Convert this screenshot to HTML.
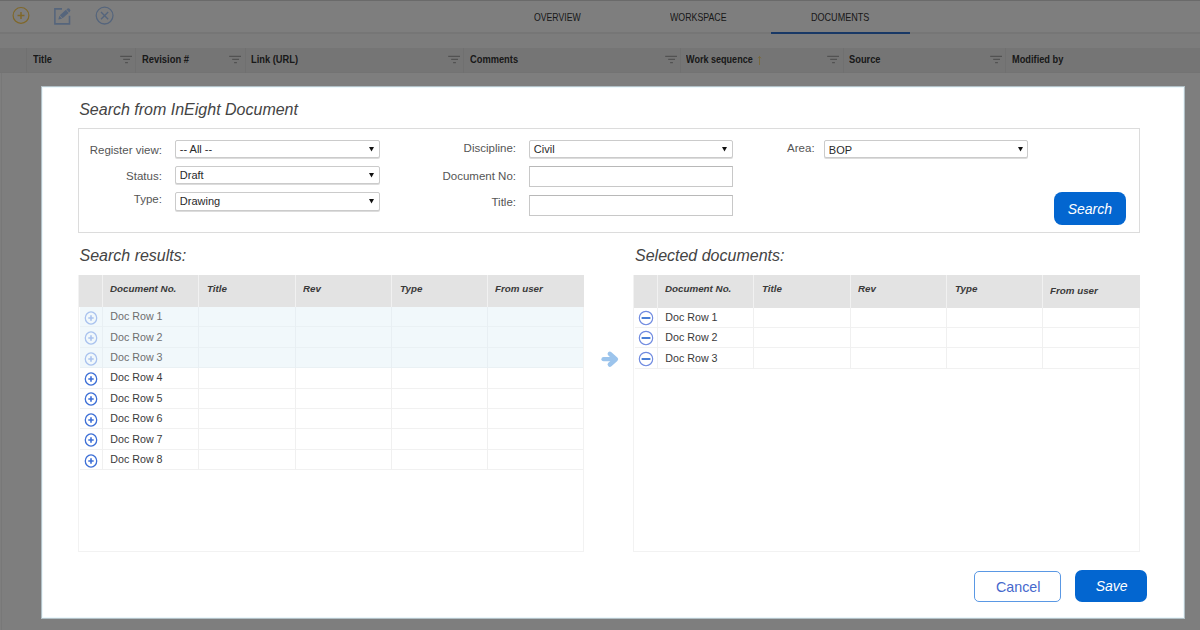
<!DOCTYPE html>
<html><head><meta charset="utf-8">
<style>
*{box-sizing:border-box;margin:0;padding:0}
html,body{width:1200px;height:630px;overflow:hidden;background:#fafafa;font-family:"Liberation Sans",sans-serif;position:relative}
.t{position:absolute;white-space:nowrap}
.r{position:absolute}
svg{position:absolute;overflow:visible}
</style></head><body>
<div class="r" style="left:0px;top:0px;width:1200px;height:1px;background:#d4d4d4"></div>
<div class="r" style="left:0px;top:1px;width:1200px;height:31px;background:#fdfdfd"></div>
<div class="r" style="left:0px;top:32px;width:1200px;height:2px;background:#ececec"></div>
<div class="r" style="left:0px;top:34px;width:1200px;height:14px;background:#f9f9f9"></div>
<div class="r" style="left:0px;top:48px;width:1200px;height:25px;background:#ebebeb"></div>
<div class="r" style="left:0px;top:73px;width:1200px;height:557px;background:#fdfdfd"></div>
<div class="r" style="left:0px;top:72px;width:1200px;height:1px;background:#e6e6e6"></div>
<div class="r" style="left:1px;top:73px;width:1px;height:557px;background:#f0f0f0"></div>
<svg style="left:0;top:0" width="130" height="33" viewBox="0 0 130 33">
<circle cx="21" cy="15.4" r="7.9" fill="none" stroke="#ffcf55" stroke-width="1.2"/>
<path d="M21 12v7M17.5 15.5h7" stroke="#ffcf55" stroke-width="1.5"/>
<path d="M62 8.9H54.9V23.9H69.5V15.8" fill="none" stroke="#abcaf8" stroke-width="1.6"/>
<g transform="translate(58.3 19.4) rotate(-41.9)" fill="#abcaf8"><path d="M0 0L3.3 -2.1V2.1z"/><rect x="3.9" y="-2.1" width="8.2" height="4.2"/><path d="M12.7 -2.1H13.4A2.1 2.1 0 0 1 13.4 2.1H12.7z"/></g>
<circle cx="104.6" cy="15.6" r="8.4" fill="none" stroke="#abcaf8" stroke-width="1.3"/>
<path d="M101 12l7.2 7.2M108.2 12l-7.2 7.2" stroke="#abcaf8" stroke-width="1.4"/>
</svg>
<div class="t" style="left:534.40px;top:11.89px;font-size:11px;line-height:11px;color:#333;font-weight:normal;font-style:normal;transform:scaleX(0.79);transform-origin:left center;">OVERVIEW</div>
<div class="t" style="left:670.40px;top:11.89px;font-size:11px;line-height:11px;color:#333;font-weight:normal;font-style:normal;transform:scaleX(0.8);transform-origin:left center;">WORKSPACE</div>
<div class="t" style="left:811.40px;top:11.89px;font-size:11px;line-height:11px;color:#333;font-weight:normal;font-style:normal;transform:scaleX(0.823);transform-origin:left center;">DOCUMENTS</div>
<div class="r" style="left:771px;top:32px;width:139px;height:2px;background:#3070cc"></div>
<div class="r" style="left:26px;top:48px;width:1px;height:25px;background:#e0e0e0"></div>
<div class="r" style="left:135px;top:48px;width:1px;height:25px;background:#e0e0e0"></div>
<div class="r" style="left:245px;top:48px;width:1px;height:25px;background:#e0e0e0"></div>
<div class="r" style="left:463px;top:48px;width:1px;height:25px;background:#e0e0e0"></div>
<div class="r" style="left:680px;top:48px;width:1px;height:25px;background:#e0e0e0"></div>
<div class="r" style="left:843px;top:48px;width:1px;height:25px;background:#e0e0e0"></div>
<div class="r" style="left:1005px;top:48px;width:1px;height:25px;background:#e0e0e0"></div>
<div class="t" style="left:33.30px;top:54.83px;font-size:10px;line-height:10px;color:#333;font-weight:bold;font-style:normal;transform:scaleX(0.93);transform-origin:left center;">Title</div>
<div class="t" style="left:142.30px;top:54.83px;font-size:10px;line-height:10px;color:#333;font-weight:bold;font-style:normal;transform:scaleX(0.94);transform-origin:left center;">Revision #</div>
<div class="t" style="left:251.30px;top:54.83px;font-size:10px;line-height:10px;color:#333;font-weight:bold;font-style:normal;transform:scaleX(0.93);transform-origin:left center;">Link (URL)</div>
<div class="t" style="left:469.80px;top:54.83px;font-size:10px;line-height:10px;color:#333;font-weight:bold;font-style:normal;transform:scaleX(0.93);transform-origin:left center;">Comments</div>
<div class="t" style="left:686.30px;top:54.83px;font-size:10px;line-height:10px;color:#333;font-weight:bold;font-style:normal;transform:scaleX(0.905);transform-origin:left center;">Work sequence</div>
<div class="t" style="left:849.30px;top:54.83px;font-size:10px;line-height:10px;color:#333;font-weight:bold;font-style:normal;transform:scaleX(0.93);transform-origin:left center;">Source</div>
<div class="t" style="left:1011.80px;top:54.83px;font-size:10px;line-height:10px;color:#333;font-weight:bold;font-style:normal;transform:scaleX(0.925);transform-origin:left center;">Modified by</div>
<svg style="left:120px;top:55px" width="12" height="9" viewBox="0 0 12 9"><path d="M0.2 1.4h11.8M3.2 4.4h6.8M5.1 7.6h2.8" stroke="#a4a4a4" stroke-width="1.3"/></svg>
<svg style="left:229px;top:55px" width="12" height="9" viewBox="0 0 12 9"><path d="M0.2 1.4h11.8M3.2 4.4h6.8M5.1 7.6h2.8" stroke="#a4a4a4" stroke-width="1.3"/></svg>
<svg style="left:447.5px;top:55px" width="12" height="9" viewBox="0 0 12 9"><path d="M0.2 1.4h11.8M3.2 4.4h6.8M5.1 7.6h2.8" stroke="#a4a4a4" stroke-width="1.3"/></svg>
<svg style="left:664.5px;top:55px" width="12" height="9" viewBox="0 0 12 9"><path d="M0.2 1.4h11.8M3.2 4.4h6.8M5.1 7.6h2.8" stroke="#a4a4a4" stroke-width="1.3"/></svg>
<svg style="left:827px;top:55px" width="12" height="9" viewBox="0 0 12 9"><path d="M0.2 1.4h11.8M3.2 4.4h6.8M5.1 7.6h2.8" stroke="#a4a4a4" stroke-width="1.3"/></svg>
<svg style="left:989.5px;top:55px" width="12" height="9" viewBox="0 0 12 9"><path d="M0.2 1.4h11.8M3.2 4.4h6.8M5.1 7.6h2.8" stroke="#a4a4a4" stroke-width="1.3"/></svg>
<svg style="left:757px;top:56px" width="5" height="10" viewBox="0 0 5 10"><path d="M2.5 0.5v8.5M1 2.3L2.5 0.5 4 2.3" fill="none" stroke="#f2cf70" stroke-width="0.9"/></svg>
<div class="r" style="left:0px;top:0px;width:1200px;height:630px;background:rgba(0,0,0,0.5)"></div>
<div class="r" style="left:40.6px;top:85.6px;width:1144.8000000000002px;height:533.8px;background:#fff;border:1px solid #b2c0c6;box-shadow:inset 0 0 0 1px #edf8fc"></div>
<div class="t" style="left:79.20px;top:102.46px;font-size:16px;line-height:16px;color:#444;font-weight:normal;font-style:italic;">Search from InEight Document</div>
<div class="r" style="left:78px;top:128px;width:1062px;height:105px;border:1px solid #dcdcdc"></div>
<div class="t" style="right:1038.10px;top:144.57px;font-size:11.5px;line-height:11.5px;color:#555;font-weight:normal;font-style:normal;text-align:right;">Register view:</div>
<div class="t" style="right:1038.10px;top:170.57px;font-size:11.5px;line-height:11.5px;color:#555;font-weight:normal;font-style:normal;text-align:right;">Status:</div>
<div class="t" style="right:1038.10px;top:193.87px;font-size:11.5px;line-height:11.5px;color:#555;font-weight:normal;font-style:normal;text-align:right;">Type:</div>
<div class="t" style="right:684.00px;top:143.17px;font-size:11.5px;line-height:11.5px;color:#555;font-weight:normal;font-style:normal;text-align:right;">Discipline:</div>
<div class="t" style="right:684.00px;top:170.57px;font-size:11.5px;line-height:11.5px;color:#555;font-weight:normal;font-style:normal;text-align:right;">Document No:</div>
<div class="t" style="right:684.00px;top:196.67px;font-size:11.5px;line-height:11.5px;color:#555;font-weight:normal;font-style:normal;text-align:right;">Title:</div>
<div class="t" style="right:385.40px;top:143.27px;font-size:11.5px;line-height:11.5px;color:#555;font-weight:normal;font-style:normal;text-align:right;">Area:</div>
<div class="r" style="left:175px;top:140.3px;width:204.5px;height:17.69999999999999px;border:1px solid #cbcbcb;border-radius:2px;background:#fff;box-shadow:0 1px 0 #dcdcdc"></div>
<div class="t" style="left:179.80px;top:143.99px;font-size:11px;line-height:11px;color:#2a2a2a;font-weight:normal;font-style:normal;">-- All --</div>
<svg style="left:369.0px;top:147.0px" width="5" height="4.5" viewBox="0 0 5 4.5"><path d="M0 0H5L2.5 4.5z" fill="#111"/></svg>
<div class="r" style="left:175px;top:166.4px;width:204.5px;height:17.900000000000006px;border:1px solid #cbcbcb;border-radius:2px;background:#fff;box-shadow:0 1px 0 #dcdcdc"></div>
<div class="t" style="left:179.80px;top:170.29px;font-size:11px;line-height:11px;color:#2a2a2a;font-weight:normal;font-style:normal;">Draft</div>
<svg style="left:369.0px;top:173.1px" width="5" height="4.5" viewBox="0 0 5 4.5"><path d="M0 0H5L2.5 4.5z" fill="#111"/></svg>
<div class="r" style="left:175px;top:192.4px;width:204.5px;height:18.299999999999983px;border:1px solid #cbcbcb;border-radius:2px;background:#fff;box-shadow:0 1px 0 #dcdcdc"></div>
<div class="t" style="left:179.80px;top:196.39px;font-size:11px;line-height:11px;color:#2a2a2a;font-weight:normal;font-style:normal;">Drawing</div>
<svg style="left:369.0px;top:199.1px" width="5" height="4.5" viewBox="0 0 5 4.5"><path d="M0 0H5L2.5 4.5z" fill="#111"/></svg>
<div class="r" style="left:529.3px;top:140.3px;width:203.4000000000001px;height:17.69999999999999px;border:1px solid #cbcbcb;border-radius:2px;background:#fff;box-shadow:0 1px 0 #dcdcdc"></div>
<div class="t" style="left:533.80px;top:143.89px;font-size:11px;line-height:11px;color:#2a2a2a;font-weight:normal;font-style:normal;">Civil</div>
<svg style="left:722.2px;top:147.0px" width="5" height="4.5" viewBox="0 0 5 4.5"><path d="M0 0H5L2.5 4.5z" fill="#111"/></svg>
<div class="r" style="left:823.8px;top:140.4px;width:204.5px;height:17.599999999999994px;border:1px solid #cbcbcb;border-radius:2px;background:#fff;box-shadow:0 1px 0 #dcdcdc"></div>
<div class="t" style="left:828.80px;top:144.69px;font-size:11px;line-height:11px;color:#2a2a2a;font-weight:normal;font-style:normal;">BOP</div>
<svg style="left:1017.8px;top:147.1px" width="5" height="4.5" viewBox="0 0 5 4.5"><path d="M0 0H5L2.5 4.5z" fill="#111"/></svg>
<div class="r" style="left:529.3px;top:166.4px;width:203.4000000000001px;height:20.299999999999983px;border:1px solid #c8c8c8;border-top-color:#b8b8b8;background:#fff"></div>
<div class="r" style="left:529.3px;top:195.3px;width:203.4000000000001px;height:20.399999999999977px;border:1px solid #c8c8c8;border-top-color:#b8b8b8;background:#fff"></div>
<div class="r" style="left:1054px;top:192.4px;width:72px;height:32.900000000000006px;background:#0366d0;border-radius:8px"></div>
<div class="t" style="left:1067.70px;top:201.95px;font-size:14px;line-height:14px;color:#fff;font-weight:normal;font-style:italic;">Search</div>
<div class="t" style="left:79.50px;top:248.06px;font-size:16px;line-height:16px;color:#444;font-weight:normal;font-style:italic;">Search results:</div>
<div class="t" style="left:635.00px;top:248.06px;font-size:16px;line-height:16px;color:#444;font-weight:normal;font-style:italic;">Selected documents:</div>
<div class="r" style="left:78px;top:275px;width:506.4px;height:276.5px;border:1px solid #f2f2f2;background:#fff"></div>
<div class="r" style="left:78.75px;top:275px;width:505.65px;height:32px;background:#e3e3e3"></div>
<div class="r" style="left:102.0px;top:275px;width:1.0px;height:32px;background:#f1f1f1"></div>
<div class="r" style="left:197.75px;top:275px;width:1.0px;height:32px;background:#f1f1f1"></div>
<div class="r" style="left:294.5px;top:275px;width:1.0px;height:32px;background:#f1f1f1"></div>
<div class="r" style="left:390.75px;top:275px;width:1.0px;height:32px;background:#f1f1f1"></div>
<div class="r" style="left:487.0px;top:275px;width:1.0px;height:32px;background:#f1f1f1"></div>
<div class="t" style="left:110.20px;top:284.16px;font-size:9.5px;line-height:9.5px;color:#3a3a3a;font-weight:bold;font-style:italic;transform:scaleX(1.03);transform-origin:left center;">Document No.</div>
<div class="t" style="left:207.05px;top:284.16px;font-size:9.5px;line-height:9.5px;color:#3a3a3a;font-weight:bold;font-style:italic;transform:scaleX(1.03);transform-origin:left center;">Title</div>
<div class="t" style="left:302.80px;top:284.16px;font-size:9.5px;line-height:9.5px;color:#3a3a3a;font-weight:bold;font-style:italic;transform:scaleX(1.03);transform-origin:left center;">Rev</div>
<div class="t" style="left:399.85px;top:284.16px;font-size:9.5px;line-height:9.5px;color:#3a3a3a;font-weight:bold;font-style:italic;transform:scaleX(1.03);transform-origin:left center;">Type</div>
<div class="t" style="left:495.40px;top:284.16px;font-size:9.5px;line-height:9.5px;color:#3a3a3a;font-weight:bold;font-style:italic;transform:scaleX(1.03);transform-origin:left center;">From user</div>
<div class="r" style="left:79.75px;top:307.0px;width:503.65px;height:20.399999999999977px;background:#f1f8fb"></div>
<div class="r" style="left:79.75px;top:326.4px;width:503.65px;height:1.0px;background:#eaf1f4"></div>
<div class="r" style="left:102.0px;top:307.0px;width:1.0px;height:20.399999999999977px;background:#e8eff3"></div>
<div class="r" style="left:197.75px;top:307.0px;width:1.0px;height:20.399999999999977px;background:#e8eff3"></div>
<div class="r" style="left:294.5px;top:307.0px;width:1.0px;height:20.399999999999977px;background:#e8eff3"></div>
<div class="r" style="left:390.75px;top:307.0px;width:1.0px;height:20.399999999999977px;background:#e8eff3"></div>
<div class="r" style="left:487.0px;top:307.0px;width:1.0px;height:20.399999999999977px;background:#e8eff3"></div>
<div class="t" style="left:110.30px;top:311.24px;font-size:10.7px;line-height:10.7px;color:#6e6e6e;font-weight:normal;font-style:normal;">Doc Row 1</div>
<svg style="left:83.35px;top:309.8px" width="16" height="16" viewBox="0 0 16 16"><ellipse cx="8" cy="8" rx="5.7" ry="6.1" fill="none" stroke="#a9c2ee" stroke-width="1.3"/><path d="M8 5.2v5.6M5.3 8h5.4" stroke="#a9c2ee" stroke-width="1.6"/></svg>
<div class="r" style="left:79.75px;top:327.4px;width:503.65px;height:20.399999999999977px;background:#f1f8fb"></div>
<div class="r" style="left:79.75px;top:346.79999999999995px;width:503.65px;height:1.0px;background:#eaf1f4"></div>
<div class="r" style="left:102.0px;top:327.4px;width:1.0px;height:20.399999999999977px;background:#e8eff3"></div>
<div class="r" style="left:197.75px;top:327.4px;width:1.0px;height:20.399999999999977px;background:#e8eff3"></div>
<div class="r" style="left:294.5px;top:327.4px;width:1.0px;height:20.399999999999977px;background:#e8eff3"></div>
<div class="r" style="left:390.75px;top:327.4px;width:1.0px;height:20.399999999999977px;background:#e8eff3"></div>
<div class="r" style="left:487.0px;top:327.4px;width:1.0px;height:20.399999999999977px;background:#e8eff3"></div>
<div class="t" style="left:110.30px;top:331.64px;font-size:10.7px;line-height:10.7px;color:#6e6e6e;font-weight:normal;font-style:normal;">Doc Row 2</div>
<svg style="left:83.35px;top:330.2px" width="16" height="16" viewBox="0 0 16 16"><ellipse cx="8" cy="8" rx="5.7" ry="6.1" fill="none" stroke="#a9c2ee" stroke-width="1.3"/><path d="M8 5.2v5.6M5.3 8h5.4" stroke="#a9c2ee" stroke-width="1.6"/></svg>
<div class="r" style="left:79.75px;top:347.8px;width:503.65px;height:20.399999999999977px;background:#f1f8fb"></div>
<div class="r" style="left:79.75px;top:367.2px;width:503.65px;height:1.0px;background:#eaf1f4"></div>
<div class="r" style="left:102.0px;top:347.8px;width:1.0px;height:20.399999999999977px;background:#e8eff3"></div>
<div class="r" style="left:197.75px;top:347.8px;width:1.0px;height:20.399999999999977px;background:#e8eff3"></div>
<div class="r" style="left:294.5px;top:347.8px;width:1.0px;height:20.399999999999977px;background:#e8eff3"></div>
<div class="r" style="left:390.75px;top:347.8px;width:1.0px;height:20.399999999999977px;background:#e8eff3"></div>
<div class="r" style="left:487.0px;top:347.8px;width:1.0px;height:20.399999999999977px;background:#e8eff3"></div>
<div class="t" style="left:110.30px;top:352.04px;font-size:10.7px;line-height:10.7px;color:#6e6e6e;font-weight:normal;font-style:normal;">Doc Row 3</div>
<svg style="left:83.35px;top:350.6px" width="16" height="16" viewBox="0 0 16 16"><ellipse cx="8" cy="8" rx="5.7" ry="6.1" fill="none" stroke="#a9c2ee" stroke-width="1.3"/><path d="M8 5.2v5.6M5.3 8h5.4" stroke="#a9c2ee" stroke-width="1.6"/></svg>
<div class="r" style="left:79.75px;top:387.59999999999997px;width:503.65px;height:1.0px;background:#f1f1f1"></div>
<div class="r" style="left:102.0px;top:368.2px;width:1.0px;height:20.399999999999977px;background:#f0f0f0"></div>
<div class="r" style="left:197.75px;top:368.2px;width:1.0px;height:20.399999999999977px;background:#f0f0f0"></div>
<div class="r" style="left:294.5px;top:368.2px;width:1.0px;height:20.399999999999977px;background:#f0f0f0"></div>
<div class="r" style="left:390.75px;top:368.2px;width:1.0px;height:20.399999999999977px;background:#f0f0f0"></div>
<div class="r" style="left:487.0px;top:368.2px;width:1.0px;height:20.399999999999977px;background:#f0f0f0"></div>
<div class="t" style="left:110.30px;top:372.44px;font-size:10.7px;line-height:10.7px;color:#3a3a3a;font-weight:normal;font-style:normal;">Doc Row 4</div>
<svg style="left:83.35px;top:371.0px" width="16" height="16" viewBox="0 0 16 16"><ellipse cx="8" cy="8" rx="5.7" ry="6.1" fill="none" stroke="#3d6fd6" stroke-width="1.3"/><path d="M8 5.2v5.6M5.3 8h5.4" stroke="#3d6fd6" stroke-width="1.6"/></svg>
<div class="r" style="left:79.75px;top:408.0px;width:503.65px;height:1.0px;background:#f1f1f1"></div>
<div class="r" style="left:102.0px;top:388.6px;width:1.0px;height:20.399999999999977px;background:#f0f0f0"></div>
<div class="r" style="left:197.75px;top:388.6px;width:1.0px;height:20.399999999999977px;background:#f0f0f0"></div>
<div class="r" style="left:294.5px;top:388.6px;width:1.0px;height:20.399999999999977px;background:#f0f0f0"></div>
<div class="r" style="left:390.75px;top:388.6px;width:1.0px;height:20.399999999999977px;background:#f0f0f0"></div>
<div class="r" style="left:487.0px;top:388.6px;width:1.0px;height:20.399999999999977px;background:#f0f0f0"></div>
<div class="t" style="left:110.30px;top:392.84px;font-size:10.7px;line-height:10.7px;color:#3a3a3a;font-weight:normal;font-style:normal;">Doc Row 5</div>
<svg style="left:83.35px;top:391.40000000000003px" width="16" height="16" viewBox="0 0 16 16"><ellipse cx="8" cy="8" rx="5.7" ry="6.1" fill="none" stroke="#3d6fd6" stroke-width="1.3"/><path d="M8 5.2v5.6M5.3 8h5.4" stroke="#3d6fd6" stroke-width="1.6"/></svg>
<div class="r" style="left:79.75px;top:428.4px;width:503.65px;height:1.0px;background:#f1f1f1"></div>
<div class="r" style="left:102.0px;top:409.0px;width:1.0px;height:20.399999999999977px;background:#f0f0f0"></div>
<div class="r" style="left:197.75px;top:409.0px;width:1.0px;height:20.399999999999977px;background:#f0f0f0"></div>
<div class="r" style="left:294.5px;top:409.0px;width:1.0px;height:20.399999999999977px;background:#f0f0f0"></div>
<div class="r" style="left:390.75px;top:409.0px;width:1.0px;height:20.399999999999977px;background:#f0f0f0"></div>
<div class="r" style="left:487.0px;top:409.0px;width:1.0px;height:20.399999999999977px;background:#f0f0f0"></div>
<div class="t" style="left:110.30px;top:413.24px;font-size:10.7px;line-height:10.7px;color:#3a3a3a;font-weight:normal;font-style:normal;">Doc Row 6</div>
<svg style="left:83.35px;top:411.8px" width="16" height="16" viewBox="0 0 16 16"><ellipse cx="8" cy="8" rx="5.7" ry="6.1" fill="none" stroke="#3d6fd6" stroke-width="1.3"/><path d="M8 5.2v5.6M5.3 8h5.4" stroke="#3d6fd6" stroke-width="1.6"/></svg>
<div class="r" style="left:79.75px;top:448.79999999999995px;width:503.65px;height:1.0px;background:#f1f1f1"></div>
<div class="r" style="left:102.0px;top:429.4px;width:1.0px;height:20.399999999999977px;background:#f0f0f0"></div>
<div class="r" style="left:197.75px;top:429.4px;width:1.0px;height:20.399999999999977px;background:#f0f0f0"></div>
<div class="r" style="left:294.5px;top:429.4px;width:1.0px;height:20.399999999999977px;background:#f0f0f0"></div>
<div class="r" style="left:390.75px;top:429.4px;width:1.0px;height:20.399999999999977px;background:#f0f0f0"></div>
<div class="r" style="left:487.0px;top:429.4px;width:1.0px;height:20.399999999999977px;background:#f0f0f0"></div>
<div class="t" style="left:110.30px;top:433.64px;font-size:10.7px;line-height:10.7px;color:#3a3a3a;font-weight:normal;font-style:normal;">Doc Row 7</div>
<svg style="left:83.35px;top:432.2px" width="16" height="16" viewBox="0 0 16 16"><ellipse cx="8" cy="8" rx="5.7" ry="6.1" fill="none" stroke="#3d6fd6" stroke-width="1.3"/><path d="M8 5.2v5.6M5.3 8h5.4" stroke="#3d6fd6" stroke-width="1.6"/></svg>
<div class="r" style="left:79.75px;top:469.19999999999993px;width:503.65px;height:1.0px;background:#f1f1f1"></div>
<div class="r" style="left:102.0px;top:449.79999999999995px;width:1.0px;height:20.399999999999977px;background:#f0f0f0"></div>
<div class="r" style="left:197.75px;top:449.79999999999995px;width:1.0px;height:20.399999999999977px;background:#f0f0f0"></div>
<div class="r" style="left:294.5px;top:449.79999999999995px;width:1.0px;height:20.399999999999977px;background:#f0f0f0"></div>
<div class="r" style="left:390.75px;top:449.79999999999995px;width:1.0px;height:20.399999999999977px;background:#f0f0f0"></div>
<div class="r" style="left:487.0px;top:449.79999999999995px;width:1.0px;height:20.399999999999977px;background:#f0f0f0"></div>
<div class="t" style="left:110.30px;top:454.04px;font-size:10.7px;line-height:10.7px;color:#3a3a3a;font-weight:normal;font-style:normal;">Doc Row 8</div>
<svg style="left:83.35px;top:452.59999999999997px" width="16" height="16" viewBox="0 0 16 16"><ellipse cx="8" cy="8" rx="5.7" ry="6.1" fill="none" stroke="#3d6fd6" stroke-width="1.3"/><path d="M8 5.2v5.6M5.3 8h5.4" stroke="#3d6fd6" stroke-width="1.6"/></svg>
<div class="r" style="left:633px;top:275px;width:506.5999999999999px;height:276.5px;border:1px solid #f2f2f2;background:#fff"></div>
<div class="r" style="left:633.75px;top:275px;width:505.8499999999999px;height:32.5px;background:#e3e3e3"></div>
<div class="r" style="left:657.0px;top:275px;width:1.0px;height:32.5px;background:#f1f1f1"></div>
<div class="r" style="left:752.75px;top:275px;width:1.0px;height:32.5px;background:#f1f1f1"></div>
<div class="r" style="left:850.0px;top:275px;width:1.0px;height:32.5px;background:#f1f1f1"></div>
<div class="r" style="left:945.75px;top:275px;width:1.0px;height:32.5px;background:#f1f1f1"></div>
<div class="r" style="left:1042.0px;top:275px;width:1.0px;height:32.5px;background:#f1f1f1"></div>
<div class="t" style="left:665.20px;top:284.16px;font-size:9.5px;line-height:9.5px;color:#3a3a3a;font-weight:bold;font-style:italic;transform:scaleX(1.03);transform-origin:left center;">Document No.</div>
<div class="t" style="left:762.05px;top:284.16px;font-size:9.5px;line-height:9.5px;color:#3a3a3a;font-weight:bold;font-style:italic;transform:scaleX(1.03);transform-origin:left center;">Title</div>
<div class="t" style="left:858.30px;top:284.16px;font-size:9.5px;line-height:9.5px;color:#3a3a3a;font-weight:bold;font-style:italic;transform:scaleX(1.03);transform-origin:left center;">Rev</div>
<div class="t" style="left:954.85px;top:284.16px;font-size:9.5px;line-height:9.5px;color:#3a3a3a;font-weight:bold;font-style:italic;transform:scaleX(1.03);transform-origin:left center;">Type</div>
<div class="t" style="left:1050.40px;top:285.66px;font-size:9.5px;line-height:9.5px;color:#3a3a3a;font-weight:bold;font-style:italic;transform:scaleX(1.03);transform-origin:left center;">From user</div>
<div class="r" style="left:634.75px;top:326.9px;width:503.8499999999999px;height:1.0px;background:#f1f1f1"></div>
<div class="r" style="left:657.0px;top:307.5px;width:1.0px;height:20.399999999999977px;background:#f0f0f0"></div>
<div class="r" style="left:752.75px;top:307.5px;width:1.0px;height:20.399999999999977px;background:#f0f0f0"></div>
<div class="r" style="left:850.0px;top:307.5px;width:1.0px;height:20.399999999999977px;background:#f0f0f0"></div>
<div class="r" style="left:945.75px;top:307.5px;width:1.0px;height:20.399999999999977px;background:#f0f0f0"></div>
<div class="r" style="left:1042.0px;top:307.5px;width:1.0px;height:20.399999999999977px;background:#f0f0f0"></div>
<div class="t" style="left:665.30px;top:311.74px;font-size:10.7px;line-height:10.7px;color:#3a3a3a;font-weight:normal;font-style:normal;">Doc Row 1</div>
<svg style="left:637.65px;top:310.0px" width="16" height="16" viewBox="0 0 16 16"><circle cx="8" cy="8" r="6.7" fill="none" stroke="#6f8ae0" stroke-width="1.15"/><path d="M3.6 8h8.8" stroke="#4a7ed6" stroke-width="2"/></svg>
<div class="r" style="left:634.75px;top:347.29999999999995px;width:503.8499999999999px;height:1.0px;background:#f1f1f1"></div>
<div class="r" style="left:657.0px;top:327.9px;width:1.0px;height:20.399999999999977px;background:#f0f0f0"></div>
<div class="r" style="left:752.75px;top:327.9px;width:1.0px;height:20.399999999999977px;background:#f0f0f0"></div>
<div class="r" style="left:850.0px;top:327.9px;width:1.0px;height:20.399999999999977px;background:#f0f0f0"></div>
<div class="r" style="left:945.75px;top:327.9px;width:1.0px;height:20.399999999999977px;background:#f0f0f0"></div>
<div class="r" style="left:1042.0px;top:327.9px;width:1.0px;height:20.399999999999977px;background:#f0f0f0"></div>
<div class="t" style="left:665.30px;top:332.14px;font-size:10.7px;line-height:10.7px;color:#3a3a3a;font-weight:normal;font-style:normal;">Doc Row 2</div>
<svg style="left:637.65px;top:330.4px" width="16" height="16" viewBox="0 0 16 16"><circle cx="8" cy="8" r="6.7" fill="none" stroke="#6f8ae0" stroke-width="1.15"/><path d="M3.6 8h8.8" stroke="#4a7ed6" stroke-width="2"/></svg>
<div class="r" style="left:634.75px;top:367.7px;width:503.8499999999999px;height:1.0px;background:#f1f1f1"></div>
<div class="r" style="left:657.0px;top:348.3px;width:1.0px;height:20.399999999999977px;background:#f0f0f0"></div>
<div class="r" style="left:752.75px;top:348.3px;width:1.0px;height:20.399999999999977px;background:#f0f0f0"></div>
<div class="r" style="left:850.0px;top:348.3px;width:1.0px;height:20.399999999999977px;background:#f0f0f0"></div>
<div class="r" style="left:945.75px;top:348.3px;width:1.0px;height:20.399999999999977px;background:#f0f0f0"></div>
<div class="r" style="left:1042.0px;top:348.3px;width:1.0px;height:20.399999999999977px;background:#f0f0f0"></div>
<div class="t" style="left:665.30px;top:352.54px;font-size:10.7px;line-height:10.7px;color:#3a3a3a;font-weight:normal;font-style:normal;">Doc Row 3</div>
<svg style="left:637.65px;top:350.8px" width="16" height="16" viewBox="0 0 16 16"><circle cx="8" cy="8" r="6.7" fill="none" stroke="#6f8ae0" stroke-width="1.15"/><path d="M3.6 8h8.8" stroke="#4a7ed6" stroke-width="2"/></svg>
<svg style="left:600px;top:350px" width="20" height="18" viewBox="0 0 20 18"><path d="M3.5 9.2H14.5" stroke="#9cc4ec" stroke-width="4.2" stroke-linecap="round"/><path d="M9.9 3.9L15.8 9.2 9.9 14.5" fill="none" stroke="#9cc4ec" stroke-width="4.6" stroke-linecap="round" stroke-linejoin="round"/></svg>
<div class="r" style="left:974.25px;top:571.25px;width:86.5px;height:30.75px;border:1px solid #5a98e4;border-radius:5px;background:#fff"></div>
<div class="t" style="left:995.95px;top:579.60px;font-size:14.3px;line-height:14.3px;color:#4668cc;font-weight:normal;font-style:normal;">Cancel</div>
<div class="r" style="left:1075px;top:569.5px;width:72px;height:32.5px;background:#0366d0;border-radius:7px"></div>
<div class="t" style="left:1095.65px;top:578.55px;font-size:14px;line-height:14px;color:#fff;font-weight:normal;font-style:italic;">Save</div>
</body></html>
